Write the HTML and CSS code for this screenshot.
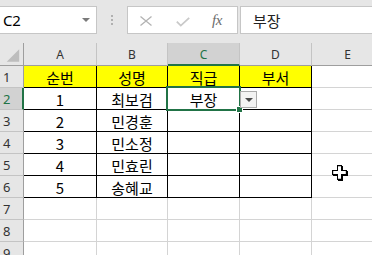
FILE: index.html
```html
<!DOCTYPE html>
<html lang="ko">
<head>
<meta charset="utf-8">
<link rel="stylesheet" href="styles.css">
</head>
<body>
<div class="app">
  <div class="toolbar">
    <div class="namebox"><span class="ref">C2</span><span class="caret"></span></div>
    <div class="grip"><i></i><i></i><i></i></div>
    <div class="fnbox">
      <svg class="ic-x" width="12" height="10" viewBox="0 0 12 10"><path d="M0.5 0.5 L11.5 9.5 M11.5 0.5 L0.5 9.5" stroke="#b3b3b3" stroke-width="1.3" fill="none"/></svg>
      <svg class="ic-ok" width="14" height="10" viewBox="0 0 14 10"><path d="M0.8 4.6 L4.8 8.6 L13.2 0.8" stroke="#c9c9c9" stroke-width="1.8" fill="none"/></svg>
      <span class="fx">fx</span>
    </div>
    <div class="formula">부장</div>
  </div>
  <div class="sheet">
    <div class="hd corner"><svg width="24" height="23" viewBox="0 0 24 23"><path d="M7 19 L20 19 L20 6 Z" fill="#bdbdbd"/></svg></div>
    <div class="hd col">A</div>
    <div class="hd col">B</div>
    <div class="hd col sel">C</div>
    <div class="hd col">D</div>
    <div class="hd col">E</div>

    <div class="hd row">1</div>
    <div class="c y bk">순번</div>
    <div class="c y bk">성명</div>
    <div class="c y bk">직급</div>
    <div class="c y bk">부서</div>
    <div class="c"></div>

    <div class="hd row rsel">2</div>
    <div class="c bk">1</div>
    <div class="c bk">최보검</div>
    <div class="c bk">부장</div>
    <div class="c bk"></div>
    <div class="c"></div>

    <div class="hd row">3</div>
    <div class="c bk">2</div>
    <div class="c bk">민경훈</div>
    <div class="c bk"></div>
    <div class="c bk"></div>
    <div class="c"></div>

    <div class="hd row">4</div>
    <div class="c bk">3</div>
    <div class="c bk">민소정</div>
    <div class="c bk"></div>
    <div class="c bk"></div>
    <div class="c"></div>

    <div class="hd row">5</div>
    <div class="c bk">4</div>
    <div class="c bk">민효린</div>
    <div class="c bk"></div>
    <div class="c bk"></div>
    <div class="c"></div>

    <div class="hd row">6</div>
    <div class="c bk">5</div>
    <div class="c bk">송혜교</div>
    <div class="c bk"></div>
    <div class="c bk"></div>
    <div class="c"></div>

    <div class="hd row">7</div>
    <div class="c"></div><div class="c"></div><div class="c"></div><div class="c"></div><div class="c"></div>
    <div class="hd row">8</div>
    <div class="c"></div><div class="c"></div><div class="c"></div><div class="c"></div><div class="c"></div>
    <div class="hd row">9</div>
    <div class="c"></div><div class="c"></div><div class="c"></div><div class="c"></div><div class="c"></div>

    <div class="selbox"></div>
    <div class="handle"></div>
    <div class="ddbtn"><span class="tri"></span></div>
    <svg class="cursor" width="16" height="16" viewBox="0 0 16 16">
      <path d="M6 1 H11 V6 H16 V11 H11 V16 H6 V11 H1 V6 H6 Z" fill="#000"/>
      <path d="M5 0 H10 V5 H15 V10 H10 V15 H5 V10 H0 V5 H5 Z" fill="#000"/>
      <path d="M6 1.2 H9 V6 H13.8 V9 H9 V13.8 H6 V9 H1.2 V6 H6 Z" fill="#fff"/>
    </svg>
  </div>
</div>
</body>
</html>
```

FILE: styles.css
```css
html, body {
  margin: 0;
  padding: 0;
  background: #ffffff;
}
.app {
  width: 372px;
  height: 255px;
  overflow: hidden;
  font-family: "Noto Sans CJK KR", "Noto Sans", sans-serif;
}
.toolbar {
  height: 43px;
  box-sizing: border-box;
  background: #e6e6e6;
  padding-top: 6px;
  display: flex;
  align-items: flex-start;
  width: 420px;
}
.namebox {
  margin-left: -1px;
  width: 98px;
  height: 28px;
  box-sizing: border-box;
  background: #fff;
  border: 1px solid #c6c6c6;
  display: flex;
  align-items: center;
  justify-content: space-between;
  padding-left: 3px;
  padding-right: 6px;
}
.ref {
  font-family: "Noto Sans", sans-serif;
  font-size: 15px;
  color: #000;
  letter-spacing: -0.3px;
}
.caret {
  width: 0;
  height: 0;
  border-left: 4px solid transparent;
  border-right: 4px solid transparent;
  border-top: 4px solid #7a7a7a;
}
.grip {
  margin-left: 14px;
  margin-top: 9px;
  width: 2px;
  display: flex;
  flex-direction: column;
  gap: 2px;
}
.grip i {
  display: block;
  width: 2px;
  height: 2px;
  background: #b0b0b0;
}
.fnbox {
  margin-left: 14px;
  width: 111px;
  height: 28px;
  box-sizing: border-box;
  background: #fff;
  border: 1px solid #c6c6c6;
  display: flex;
  align-items: center;
}
.ic-x {
  margin-left: 12px;
  margin-top: 1px;
}
.ic-ok {
  margin-left: 24px;
  margin-top: 3px;
}
.fx {
  margin-left: 22px;
  font-family: "Liberation Serif", serif;
  font-style: italic;
  font-size: 15px;
  color: #6b6b6b;
  letter-spacing: -0.5px;
}
.formula {
  margin-left: 2px;
  width: 140px;
  height: 28px;
  box-sizing: border-box;
  background: #fff;
  border: 1px solid #c6c6c6;
  padding-left: 12px;
  display: flex;
  align-items: center;
  font-size: 15px;
  color: #222;
}
.sheet {
  position: relative;
  display: grid;
  grid-template-columns: 24px 73px 71px 72px 72px 72px;
  grid-template-rows: 23px repeat(9, 22px);
}
.hd {
  box-sizing: border-box;
  background: #e6e6e6;
  border-right: 1px solid #c4c4c4;
  border-bottom: 1px solid #c4c4c4;
  color: #333;
  font-family: "Noto Sans", sans-serif;
  font-size: 12px;
  display: flex;
  align-items: center;
}
.corner {
  padding: 0;
  border-right-color: #9e9e9e;
  border-bottom-color: #9e9e9e;
}
.corner svg {
  display: block;
}
.col {
  justify-content: center;
  border-bottom-color: #9e9e9e;
  padding-top: 1px;
}
.col.sel {
  background: #d2d2d2;
  color: #217346;
  border-bottom: 2px solid #217346;
}
.row {
  padding-left: 3px;
  border-right-color: #9e9e9e;
  font-size: 13px;
}
.row.rsel {
  color: #217346;
  background: #d2d2d2;
  border-right: 2px solid #217346;
}
.c {
  box-sizing: border-box;
  border-right: 1px solid #d4d4d4;
  border-bottom: 1px solid #d4d4d4;
  font-size: 15px;
  color: #000;
  display: flex;
  align-items: center;
  justify-content: center;
  padding-top: 1px;
}
.c.y {
  background: #ffff00;
}
.c.bk {
  border-right-color: #000;
  border-bottom-color: #000;
}
.selbox {
  position: absolute;
  left: 166px;
  top: 43px;
  width: 75px;
  height: 25px;
  box-sizing: border-box;
  border: 2px solid #217346;
}
.handle {
  position: absolute;
  left: 237px;
  top: 64px;
  width: 5px;
  height: 5px;
  background: #217346;
  box-shadow: 0 0 0 1px #fff;
}
.ddbtn {
  position: absolute;
  left: 240px;
  top: 48px;
  width: 17px;
  height: 17px;
  box-sizing: border-box;
  background: #f3f3f3;
  border: 1px solid #ababab;
  display: flex;
  align-items: center;
  justify-content: center;
}
.tri {
  width: 0;
  height: 0;
  border-left: 4px solid transparent;
  border-right: 4px solid transparent;
  border-top: 4px solid #4a4a4a;
}
.cursor {
  position: absolute;
  left: 332px;
  top: 122px;
}
```
